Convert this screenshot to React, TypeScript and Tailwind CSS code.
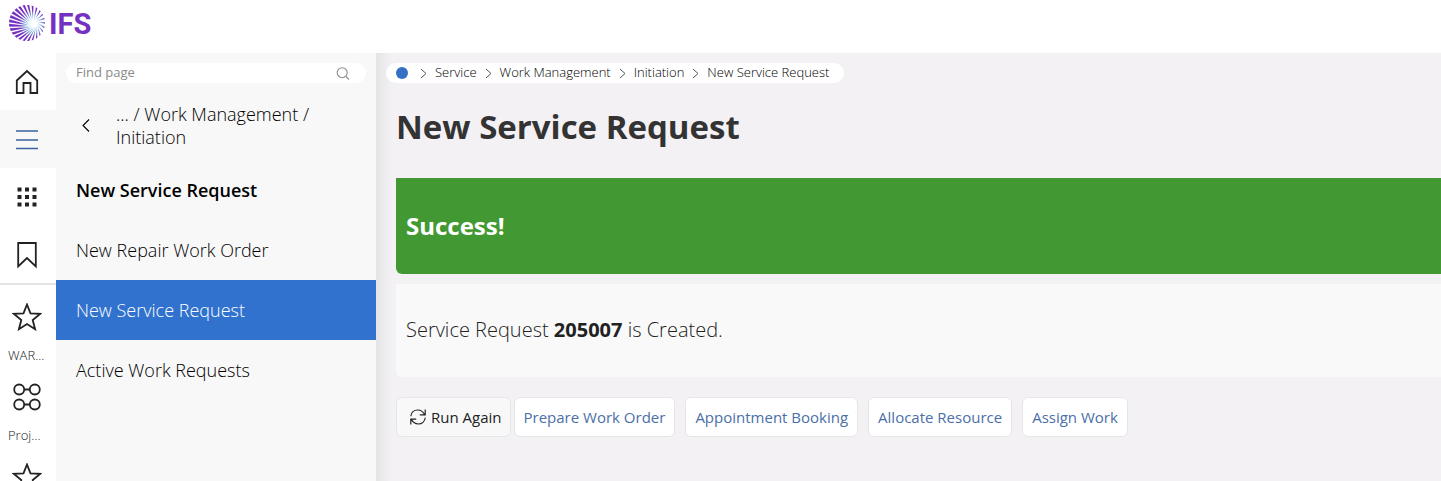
import React, { FC } from "react";

const RAYS = 25;

const LogoMark: FC = () => {
  const rays = Array.from({ length: RAYS }, (_, i) => {
    const a = (i / RAYS) * Math.PI * 2;
    const tipX = 19 + Math.cos(a) * 18;
    const tipY = 19 + Math.sin(a) * 18;
    const b = a - 0.7;
    const hubX = 26 + Math.cos(b) * 3;
    const hubY = 20 + Math.sin(b) * 3;
    // left side rays are heavier than the right ones
    const w = 1.1 - Math.cos(a) * 0.4;
    const dx = -Math.sin(a) * w;
    const dy = Math.cos(a) * w;
    return `${hubX},${hubY} ${tipX + dx},${tipY + dy} ${tipX - dx},${tipY - dy}`;
  });

  return (
    <svg width="38" height="38" viewBox="0 0 38 38" aria-hidden="true">
      <defs>
        <radialGradient id="ray" gradientUnits="userSpaceOnUse" cx="25" cy="20" r="20">
          <stop offset="0.2" stopColor="#b9e4f4" />
          <stop offset="0.5" stopColor="#6f7fd0" />
          <stop offset="0.7" stopColor="#7631c0" />
        </radialGradient>
      </defs>
      {rays.map((points) => (
        <polygon key={points} points={points} fill="url(#ray)" />
      ))}
    </svg>
  );
};

const HomeIcon: FC = () => (
  <svg width="24" height="26" viewBox="0 0 24 26" fill="none" stroke="currentColor" strokeWidth="1.8">
    <path d="M1.8 11.5 12 2l10.2 9.5V24H15.5V14h-7v10H1.8z" />
  </svg>
);

const MenuIcon: FC = () => (
  <svg width="24" height="22" viewBox="0 0 24 22" fill="none" stroke="#3a62a0" strokeWidth="1.7">
    <path d="M1 3h22M1 12h22M1 20.5h22" />
  </svg>
);

const GridIcon: FC = () => (
  <svg width="20" height="20" viewBox="0 0 20 20" fill="currentColor">
    {[0.5, 8, 15.5].map((y) =>
      [0.5, 8, 15.5].map((x) => (
        <rect key={`${x}-${y}`} x={x} y={y} width="4" height="4" />
      )),
    )}
  </svg>
);

const BookmarkIcon: FC = () => (
  <svg width="20" height="28" viewBox="0 0 20 28" fill="none" stroke="currentColor" strokeWidth="1.8">
    <path d="M1.2 2h17.6v23.5L10 17l-8.8 8.5z" />
  </svg>
);

const StarIcon: FC = () => (
  <svg width="30" height="28" viewBox="0 0 30 28" fill="none" stroke="currentColor" strokeWidth="1.8">
    <path d="M15 1.5l3.5 8.8 9.5.6-7.3 6.1 2.4 9.2-8.1-5.1-8.1 5.1 2.4-9.2L2 10.9l9.5-.6z" />
  </svg>
);

const ProjectIcon: FC = () => (
  <svg width="28" height="28" viewBox="0 0 28 28" fill="none" stroke="currentColor" strokeWidth="1.8">
    <circle cx="6.2" cy="6.5" r="5" />
    <circle cx="21.8" cy="6.5" r="5" />
    <circle cx="6.2" cy="21.5" r="5" />
    <circle cx="21.8" cy="21.5" r="5" />
    <path d="M11.2 6.5h5.6M11.2 21.5h5.6" />
  </svg>
);

const SearchIcon: FC = () => (
  <svg width="14" height="14" viewBox="0 0 14 14" fill="none" stroke="#8a8a8a" strokeWidth="1.1">
    <circle cx="6.2" cy="6.7" r="5" />
    <path d="M9.8 10.3 13 13.5" />
  </svg>
);

const RefreshIcon: FC = () => (
  <svg width="18" height="18" viewBox="0 0 18 18" fill="none" stroke="currentColor" strokeWidth="1.2">
    <path d="M1.8 8.2C2.2 4.5 5 2 8.6 2c3 0 5.4 1.4 6.9 4.4M16.2 1.6v5.2h-5.4" />
    <path d="M16.2 9.8C15.8 13.5 13 16 9.4 16c-3 0-5.4-1.4-6.9-4.4M1.8 16.4v-5.2h5.4" />
  </svg>
);

const Chevron: FC = () => (
  <svg width="7" height="11" viewBox="0 0 7 11" fill="none" stroke="#555" strokeWidth="1">
    <path d="M1 1l5 4.5L1 10" />
  </svg>
);

const railItems = [
  { label: "Home", icon: <HomeIcon />, height: "h-[57px]" },
  { label: "Menu", icon: <MenuIcon />, height: "h-[58px]", active: true },
  { label: "Apps", icon: <GridIcon />, height: "h-[58px]" },
  { label: "Bookmarks", icon: <BookmarkIcon />, height: "h-[57px]" },
];

const shortcuts = [
  { text: "WAR...", icon: <StarIcon /> },
  { text: "Proj...", icon: <ProjectIcon /> },
  { text: "", icon: <StarIcon /> },
];

const pages = [
  { text: "New Repair Work Order" },
  { text: "New Service Request", active: true },
  { text: "Active Work Requests" },
];

const crumbs = ["Service", "Work Management", "Initiation", "New Service Request"];

const actions = ["Prepare Work Order", "Appointment Booking", "Allocate Resource", "Assign Work"];

const Rail: FC = () => (
  <nav className="flex w-14 shrink-0 flex-col overflow-hidden bg-white text-[#222]" aria-label="Main">
    <div className="flex shrink-0 flex-col border-b-2 border-[#e4e4e4]">
      {railItems.map(({ label, icon, height, active }) => (
        <button
          key={label}
          aria-label={label}
          className={`flex items-center justify-center pr-0.5 ${height} ${active ? "bg-[#f8f8f8]" : ""}`}
        >
          {icon}
        </button>
      ))}
    </div>
    <div className="flex shrink-0 flex-col pt-4">
      {shortcuts.map(({ text, icon }, i) => (
        <button
          key={i}
          aria-label={text || "Favourite"}
          className="flex h-20 flex-col items-start gap-3 pl-2 text-[13px] leading-5 font-light"
        >
          <span className="flex h-8 w-[38px] items-center justify-center">{icon}</span>
          {text}
        </button>
      ))}
    </div>
  </nav>
);

const Navigator: FC = () => (
  <aside className="flex w-80 shrink-0 flex-col bg-[#f8f8f8] text-lg text-black">
    <label className="mx-2.5 mt-2.5 flex h-5 items-center rounded-full bg-white pr-4 pl-2.5">
      <input
        type="text"
        placeholder="Find page"
        aria-label="Find page"
        className="h-5 min-w-0 flex-1 pb-0.5 text-[13px] outline-none placeholder:text-[#8a8a8a]"
      />
      <SearchIcon />
    </label>
    <div className="mt-5 flex items-center pr-10 pl-6">
      <button aria-label="Back" className="flex w-9 shrink-0">
        <svg width="12" height="14" viewBox="0 0 12 14" fill="none" stroke="currentColor" strokeWidth="1.1">
          <path d="M9 .5 3 6.5l6 6" />
        </svg>
      </button>
      <div className="leading-[23px] font-light">... / Work Management / Initiation</div>
    </div>
    <div className="mt-3 flex h-[59px] items-center px-5 pb-0.5 font-semibold">New Service Request</div>
    {pages.map(({ text, active }) => (
      <a
        key={text}
        href="#"
        className={`flex h-[60px] items-center px-5 font-light ${active ? "bg-[#3072ce] text-white" : ""}`}
      >
        {text}
      </a>
    ))}
  </aside>
);

const Breadcrumbs: FC = () => (
  <nav
    aria-label="Breadcrumb"
    className="-ml-2.5 flex h-5 w-fit items-center rounded-full bg-white pr-[15px] pl-2.5 text-[13px] font-light text-black"
  >
    <span className="mr-1 size-3 rounded-full bg-[#3570c4]" />
    {crumbs.map((crumb) => (
      <React.Fragment key={crumb}>
        <span className="mx-2">
          <Chevron />
        </span>
        <a href="#">{crumb}</a>
      </React.Fragment>
    ))}
  </nav>
);

export default function App() {
  return (
    <div className="flex h-screen flex-col overflow-hidden bg-white font-['Open_Sans',sans-serif]">
      <header className="flex h-[53px] shrink-0 items-start gap-[3px] pt-1 pl-2">
        <LogoMark />
        <span className="font-[Roboto,sans-serif] text-[29px] leading-[40px] font-bold text-[#7631c0]">IFS</span>
      </header>
      <div className="flex min-h-0 flex-1">
        <Rail />
        <Navigator />
        <main className="min-w-0 flex-1 bg-[#f3f1f4] bg-linear-to-r from-[#e4e4e6] to-[#f3f1f4] to-[16px] pt-2.5 pl-5">
          <Breadcrumbs />
          <h1 className="mt-5 text-[33px] leading-[48px] font-bold text-[#333]">New Service Request</h1>
          <div className="mt-[27px] flex h-24 items-center rounded-bl-md bg-[#429933] px-2.5 text-2xl font-bold text-white">
            Success!
          </div>
          <div className="mt-2.5 flex h-[93px] items-center rounded-bl-md bg-[#f9f9f9] px-2.5 pb-0.5 text-xl font-light text-[#222]">
            <p>
              Service Request <b className="font-bold">205007</b> is Created.
            </p>
          </div>
          <div className="mt-5 flex gap-2.5 text-[15px]">
            <button className="-mr-[7px] flex h-10 items-center gap-1 rounded-md border border-[#e6e6e8] bg-[#f8f8f8] pr-2 pl-3 text-[#222]">
              <RefreshIcon />
              Run Again
            </button>
            {actions.map((action) => (
              <button
                key={action}
                className="h-10 rounded-md border border-[#e6e6e8] bg-white px-[9px] text-[#4a6fa8]"
              >
                {action}
              </button>
            ))}
          </div>
        </main>
      </div>
    </div>
  );
}
